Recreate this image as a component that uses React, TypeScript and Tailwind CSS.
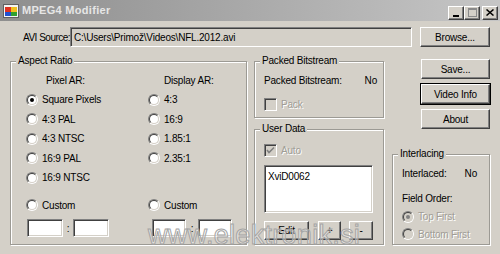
import React from "react";

const FONT = "font-['Liberation_Sans',Arial,sans-serif]";

const sunken =
  "border border-t-[#808080] border-l-[#808080] border-b-white border-r-white shadow-[inset_1px_1px_0_#404040,inset_-1px_-1px_0_#d4d0c8]";
const raised =
  "border border-t-white border-l-white border-b-[#404040] border-r-[#404040] shadow-[inset_-1px_-1px_0_#808080] bg-[#d4d0c8]";
const greyText = "text-[#a09d96] [text-shadow:1px_1px_0_#fff]";

function Button({ label, className = "", focused = false }: { label: string; className?: string; focused?: boolean }) {
  return (
    <div className={`${focused ? "outline outline-1 outline-black" : ""} ${className}`}>
      <div className={`${raised} flex h-full w-full items-center justify-center`}>{label}</div>
    </div>
  );
}

function Group({ title, className = "", children }: { title: string; className?: string; children?: React.ReactNode }) {
  return (
    <div className={`relative border border-[#9c9a94] shadow-[inset_1px_1px_0_#fff,1px_1px_0_#fff] ${className}`}>
      <span className="absolute -top-[8px] left-[5px] bg-[#d4d0c8] px-[2px] leading-[14px]">{title}</span>
      {children}
    </div>
  );
}

function Radio({ checked = false, disabled = false }: { checked?: boolean; disabled?: boolean }) {
  return (
    <span className="relative flex h-[12px] w-[12px] shrink-0 items-center justify-center rounded-full border border-t-[#808080] border-l-[#808080] border-b-white border-r-white">
      <span
        className={`flex h-[10px] w-[10px] items-center justify-center rounded-full border border-t-[#404040] border-l-[#404040] border-b-[#d4d0c8] border-r-[#d4d0c8] ${
          disabled ? "bg-[#d4d0c8]" : "bg-white"
        }`}
      >
        {checked && <span className={`h-[4px] w-[4px] rounded-full ${disabled ? "bg-[#808080]" : "bg-black"}`} />}
      </span>
    </span>
  );
}

function RadioRow({ label, checked = false, disabled = false }: { label: string; checked?: boolean; disabled?: boolean }) {
  return (
    <div className="flex h-[19.5px] items-center gap-[4px] whitespace-nowrap">
      <Radio checked={checked} disabled={disabled} />
      <span className={disabled ? greyText : ""}>{label}</span>
    </div>
  );
}

function Check({ checked = false }: { checked?: boolean }) {
  return (
    <span className={`flex h-[13px] w-[13px] shrink-0 items-center justify-center bg-[#d4d0c8] ${sunken}`}>
      {checked && (
        <svg width="9" height="9" viewBox="0 0 9 9">
          <path d="M1 4 L3 6.5 L8 1.5" stroke="#808080" strokeWidth="1.6" fill="none" />
        </svg>
      )}
    </span>
  );
}

function SmallBox({ className = "" }: { className?: string }) {
  return <div className={`h-[18px] bg-white ${sunken} ${className}`} />;
}

function CaptionButton({ children }: { children: React.ReactNode }) {
  return (
    <div className={`${raised} flex h-[14px] w-[16px] items-center justify-center`}>{children}</div>
  );
}

export default function App() {
  return (
    <div className={`relative h-[254px] w-[500px] overflow-hidden bg-[#d4d0c8] text-[10px] tracking-[-0.2px] text-black ${FONT}`}>
      {/* title bar */}
      <div className="flex h-[21px] items-center bg-gradient-to-r from-[#8e8e8e] to-[#c6c6c6] pl-[3px] pr-[2px]">
        <svg width="16" height="16" viewBox="0 0 16 16" className="shrink-0">
          <rect x="0.5" y="1.5" width="15" height="13" fill="#f4f4f4" stroke="#606060" />
          <rect x="2" y="4" width="6" height="5" fill="#e03020" />
          <rect x="8" y="4" width="6" height="5" fill="#f0c020" />
          <rect x="2" y="9" width="6" height="4" fill="#2050d0" />
          <rect x="8" y="9" width="6" height="4" fill="#30a030" />
        </svg>
        <span className="ml-[3px] text-[11px] font-bold tracking-[0.3px] text-[#e6e6e6]">MPEG4 Modifier</span>
        <div className="ml-auto mt-[4px] flex items-center">
          <CaptionButton>
            <span className="mt-[6px] h-[2px] w-[6px] bg-black" />
          </CaptionButton>
          <CaptionButton>
            <span className="h-[9px] w-[9px] border border-t-2 border-[#8a8a8a]" />
          </CaptionButton>
          <div className="ml-[2px]">
            <CaptionButton>
              <svg width="8" height="7" viewBox="0 0 8 7">
                <path d="M0.5 0.5 L7.5 6.5 M7.5 0.5 L0.5 6.5" stroke="#000" strokeWidth="1.5" />
              </svg>
            </CaptionButton>
          </div>
        </div>
      </div>

      <div className="px-[10px]">
        {/* source row */}
        <div className="mt-[6px] flex h-[20px] items-center">
          <span className="w-[60px] whitespace-nowrap pl-[13px] tracking-[-0.5px]">AVI Source:</span>
          <div className={`flex h-[20px] w-[342px] items-center whitespace-nowrap bg-[#d4d0c8] pl-[3px] ${sunken}`}>
            C:\Users\Primož\Videos\NFL.2012.avi
          </div>
          <Button label="Browse..." className="ml-[8px] h-[20px] w-[70px]" />
        </div>

        {/* main area */}
        <div className="mt-[12px] flex">
          {/* Aspect Ratio */}
          <Group title="Aspect Ratio" className="mt-[2px] h-[184px] w-[237px]">
            <div className="flex pl-[15px]">
              <div className="flex w-[122px] flex-col">
                <div className="mt-[8px] flex h-[20px] items-center pl-[20px]">Pixel AR:</div>
                <RadioRow label="Square Pixels" checked />
                <RadioRow label="4:3 PAL" />
                <RadioRow label="4:3 NTSC" />
                <RadioRow label="16:9 PAL" />
                <RadioRow label="16:9 NTSC" />
                <div className="mt-[8px]">
                  <RadioRow label="Custom" />
                </div>
                <div className="mt-[4px] flex items-center">
                  <SmallBox className="ml-[1px] w-[36px]" />
                  <span className="w-[10px] text-center">:</span>
                  <SmallBox className="w-[36px]" />
                </div>
              </div>
              <div className="flex w-[95px] flex-col">
                <div className="mt-[8px] flex h-[20px] items-center pl-[16px]">Display AR:</div>
                <RadioRow label="4:3" />
                <RadioRow label="16:9" />
                <RadioRow label="1.85:1" />
                <RadioRow label="2.35:1" />
                <div className="h-[19.5px]" />
                <div className="mt-[8px]">
                  <RadioRow label="Custom" />
                </div>
                <div className="mt-[4px] flex items-center">
                  <SmallBox className="ml-[4px] w-[34px]" />
                  <span className="w-[12px] text-center">:</span>
                  <SmallBox className="w-[34px]" />
                </div>
              </div>
            </div>
          </Group>

          {/* middle column */}
          <div className="ml-[7px] mt-[2px] flex w-[130px] flex-col">
            <Group title="Packed Bitstream" className="h-[57px]">
              <div className="mt-[11px] flex pl-[9px] pr-[6px]">
                <span>Packed Bitstream:</span>
                <span className="ml-auto">No</span>
              </div>
              <div className="mt-[9px] flex items-center gap-[4px] pl-[9px]">
                <Check />
                <span className={greyText}>Pack</span>
              </div>
            </Group>
            <Group title="User Data" className="mt-[11px] h-[116px]">
              <div className="mt-[13px] flex items-center gap-[4px] pl-[9px]">
                <Check checked />
                <span className={greyText}>Auto</span>
              </div>
              <div className={`ml-[9px] mt-[7px] h-[48px] w-[109px] bg-white pl-[3px] pt-[3px] ${sunken}`}>XviD0062</div>
              <div className="ml-[9px] mt-[8px] flex">
                <Button label="Edit" className="h-[19px] w-[45px]" />
                <Button label="+" className="ml-[9px] h-[19px] w-[23px]" />
                <Button label="-" className="ml-[8px] h-[19px] w-[24px]" />
              </div>
            </Group>
          </div>

          {/* right column */}
          <div className="ml-[8px] flex w-[98px] flex-col items-end">
            <Button label="Save..." className="h-[20px] w-[69px]" />
            <Button label="Video Info" focused className="mt-[5px] h-[20px] w-[69px]" />
            <Button label="About" className="mt-[5px] h-[20px] w-[69px]" />
            <Group title="Interlacing" className="mt-[25px] h-[91px] w-[98px]">
              <div className="mt-[11px] flex pl-[9px] pr-[12px]">
                <span>Interlaced:</span>
                <span className="ml-auto">No</span>
              </div>
              <div className="mt-[10px] pl-[9px]">Field Order:</div>
              <div className="mt-[1px] pl-[9px]">
                <RadioRow label="Top First" checked disabled />
                <div className="-mt-[2px]">
                  <RadioRow label="Bottom First" disabled />
                </div>
              </div>
            </Group>
          </div>
        </div>
      </div>

      {/* watermark */}
      <div className="pointer-events-none absolute left-[148px] top-[222px] font-['Liberation_Sans',sans-serif] text-[27px] leading-none tracking-[0.3px] text-white/40 [-webkit-text-stroke:1px_#a4a4a4]">
        www.elektronik.si
      </div>
    </div>
  );
}
